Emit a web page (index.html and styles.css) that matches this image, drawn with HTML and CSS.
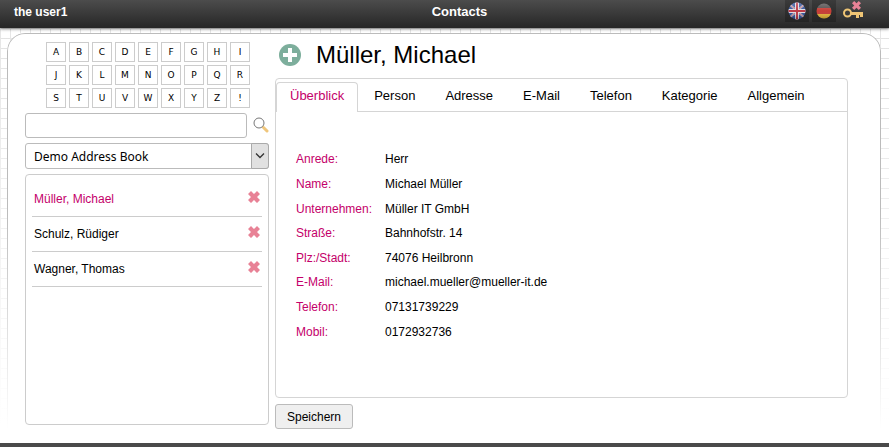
FILE: index.html
```html
<!DOCTYPE html>
<html lang="de">
<head>
<meta charset="utf-8">
<meta name="viewport" content="width=device-width, initial-scale=1">
<title>Contacts</title>
<link rel="stylesheet" href="styles.css">
</head>
<body>
<svg width="0" height="0" class="sprite" aria-hidden="true">
  <symbol id="cross" viewBox="0 0 12 12"><path d="M3 0 6 3 9 0 12 3 9 6 12 9 9 12 6 9 3 12 0 9 3 6 0 3z"/></symbol>
</svg>
<header class="topbar">
  <span class="user">the user1</span>
  <h1 class="title">Contacts</h1>
  <nav class="tools" aria-label="Sprache und Abmelden">
    <a class="tile" href="#en" aria-label="English">
      <svg width="20" height="18" viewBox="0 0 20 18">
        <defs>
          <clipPath id="ball"><circle cx="10" cy="9" r="8.500"/></clipPath>
          <linearGradient id="gloss" x1="0" y1="0" x2="0" y2="1"><stop offset="0" stop-color="#fff" stop-opacity=".3"/><stop offset=".5" stop-color="#fff" stop-opacity=".05"/><stop offset="1" stop-color="#000" stop-opacity=".3"/></linearGradient>
        </defs>
        <g clip-path="url(#ball)">
          <path fill="#2b4a94" d="M0 0h20v18H0z"/>
          <path stroke="#c9cad6" stroke-width="2" d="M1 1l18 16M19 1 1 17"/>
          <path stroke="#b5404a" stroke-width=".8" d="M1 1l18 16M19 1 1 17"/>
          <path stroke="#dcdce2" stroke-width="4" d="M10 0v18M0 9h20"/>
          <path stroke="#b92f3c" stroke-width="2" d="M10 0v18M0 9h20"/>
          <path fill="url(#gloss)" d="M0 0h20v18H0z"/>
        </g>
      </svg>
    </a>
    <a class="tile" href="#de" aria-label="Deutsch">
      <svg width="20" height="18" viewBox="0 0 20 18">
        <defs><clipPath id="ball2"><circle cx="10" cy="9" r="7.500"/></clipPath></defs>
        <g clip-path="url(#ball2)">
          <path fill="#4a4646" d="M0 0h20v6H0z"/>
          <path fill="#c4332b" d="M0 6h20v6H0z"/>
          <path fill="#e6b32e" d="M0 12h20v6H0z"/>
          <path fill="url(#gloss)" d="M0 0h20v18H0z"/>
        </g>
      </svg>
    </a>
    <a class="logout" href="#logout" aria-label="Abmelden">
      <svg width="20" height="20" viewBox="0 0 20 20">
        <circle cx="4.500" cy="13" r="3.500" fill="none" stroke="#efc575" stroke-width="2"/>
        <path fill="#efc575" d="M8 12h12v5h-3v-2h-1v3h-3v-3H8z"/>
        <use href="#cross" x="9" y="1" width="9" height="9" fill="#e88296"/>
      </svg>
    </a>
  </nav>
</header>
<main class="sheet">
  <aside class="sidebar">
    <div class="letters">
      <button>A</button><button>B</button><button>C</button><button>D</button><button>E</button><button>F</button><button>G</button><button>H</button><button>I</button>
      <button>J</button><button>K</button><button>L</button><button>M</button><button>N</button><button>O</button><button>P</button><button>Q</button><button>R</button>
      <button>S</button><button>T</button><button>U</button><button>V</button><button>W</button><button>X</button><button>Y</button><button>Z</button><button>!</button>
    </div>
    <form class="search">
      <input type="text" aria-label="Suche">
      <button aria-label="Suchen">
        <svg width="16" height="16" viewBox="0 0 16 16" fill="none">
          <path stroke="#efc67c" stroke-width="3" stroke-linecap="round" d="M10.500 10.500 14 14"/>
          <circle cx="6" cy="6" r="5" fill="#fff" stroke="#777"/>
        </svg>
      </button>
    </form>
    <div class="book">
      <select aria-label="Adressbuch"><option>Demo Address Book</option></select>
      <span class="arrow"><svg width="10" height="6" viewBox="0 0 10 6"><path fill="none" stroke="#333" stroke-width="1.300" d="M1 .500 5 4.500 9 .500"/></svg></span>
    </div>
    <ul class="contacts">
      <li><a class="active" href="#mueller">Müller, Michael</a><button aria-label="Müller, Michael löschen"><svg width="12" height="12"><use href="#cross"/></svg></button></li>
      <li><a href="#schulz">Schulz, Rüdiger</a><button aria-label="Schulz, Rüdiger löschen"><svg width="12" height="12"><use href="#cross"/></svg></button></li>
      <li><a href="#wagner">Wagner, Thomas</a><button aria-label="Wagner, Thomas löschen"><svg width="12" height="12"><use href="#cross"/></svg></button></li>
    </ul>
  </aside>
  <section class="detail">
    <div class="heading">
      <button class="add" aria-label="Neuer Kontakt">
        <svg width="22" height="22" viewBox="0 0 22 22"><circle cx="11" cy="11" r="11" fill="#7dae9c"/><path fill="#fff" d="M9 4h4v5h5v4h-5v5H9v-5H4V9h5z"/></svg>
      </button>
      <h2>Müller, Michael</h2>
    </div>
    <div class="card">
      <nav class="tabs">
        <a class="active" href="#overview">Überblick</a>
        <a href="#person">Person</a>
        <a href="#address">Adresse</a>
        <a href="#email">E-Mail</a>
        <a href="#phone">Telefon</a>
        <a href="#category">Kategorie</a>
        <a href="#general">Allgemein</a>
      </nav>
      <dl class="fields">
        <dt>Anrede:</dt><dd>Herr</dd>
        <dt>Name:</dt><dd>Michael Müller</dd>
        <dt>Unternehmen:</dt><dd>Müller IT GmbH</dd>
        <dt>Straße:</dt><dd>Bahnhofstr. 14</dd>
        <dt>Plz:/Stadt:</dt><dd>74076 Heilbronn</dd>
        <dt>E-Mail:</dt><dd>michael.mueller@mueller-it.de</dd>
        <dt>Telefon:</dt><dd>07131739229</dd>
        <dt>Mobil:</dt><dd>0172932736</dd>
      </dl>
    </div>
    <button class="save">Speichern</button>
  </section>
</main>
<footer class="bottombar"></footer>
</body>
</html>
```
FILE: styles.css
```css
* { box-sizing: border-box; }

body {
  margin: 0;
  min-height: 100vh;
  display: flex;
  flex-direction: column;
  font: 12px/16px "Liberation Sans", Arial, sans-serif;
  color: #000;
  background:
    linear-gradient(rgba(255, 255, 255, 0), #fff 425px),
    linear-gradient(90deg, #e4e4e4 1px, transparent 1px) 0 0 / 10px 10px,
    linear-gradient(#e0e0e0 1px, transparent 1px) 0 8px / 10px 10px,
    #fff;
}

button {
  padding: 0;
  border: 0;
  background: none;
  font: inherit;
  color: inherit;
}

a { color: inherit; text-decoration: none; }
svg { display: block; }
.sprite { position: absolute; }

.topbar {
  display: grid;
  grid-template-columns: 1fr auto 1fr;
  height: 28px;
  background: linear-gradient(#4c4c4c, #262626);
  box-shadow: 0 1px 3px rgba(0, 0, 0, .5);
  color: #fff;
  font-weight: bold;
  line-height: 24px;
}

.user { padding-left: 14px; }

.title {
  margin: 0;
  padding-left: 30px;
  font-size: 13px;
  line-height: 24px;
}

.tools {
  display: flex;
  justify-content: flex-end;
  gap: 3px;
  padding-right: 26px;
}

.tile {
  width: 24px;
  height: 22px;
  padding: 2px;
  background: rgba(0, 0, 0, .22);
}

.logout { margin-left: 4px; }

.sheet {
  position: relative;
  flex: 1;
  display: flex;
  align-items: flex-start;
  gap: 6px;
  margin: 5px 8px 14px 7px;
  padding: 9px 33px 0 18px;
  border-radius: 18px 18px 0 0;
  background: #fff;
}

.sheet::before {
  content: "";
  position: absolute;
  inset: 0;
  border: 1px solid #bbb;
  border-bottom: 0;
  border-radius: inherit;
  mask-image: linear-gradient(#000 45%, transparent);
  pointer-events: none;
}

.sidebar {
  width: 244px;
  display: flex;
  flex-direction: column;
  gap: 5px;
}

.letters {
  display: grid;
  grid-template-columns: repeat(9, 20px);
  gap: 3px;
  padding-left: 21px;
}

.letters button {
  height: 20px;
  border: 1px solid #ccc;
  font: 9px/18px "DejaVu Sans", Verdana, sans-serif;
}

.search {
  display: flex;
  align-items: center;
  gap: 6px;
}

.search input {
  flex: 1;
  min-width: 0;
  height: 25px;
  border: 1px solid #bbb;
  border-radius: 3px;
  font: inherit;
}

.search svg { margin-bottom: 2px; }

.book { display: grid; }

.book select,
.arrow { grid-area: 1 / 1; }

.book select {
  appearance: none;
  height: 26px;
  padding: 0 24px 0 8px;
  border: 1px solid #bbb;
  border-radius: 3px;
  background: #fff;
  font: 12px "Noto Sans", sans-serif;
  color: #000;
}

.arrow {
  justify-self: end;
  width: 18px;
  display: grid;
  place-items: center;
  border: 1px solid #aaa;
  border-radius: 0 3px 3px 0;
  background: #e1e1e1;
  pointer-events: none;
}

.contacts {
  height: 251px;
  margin: 0;
  padding: 7px 6px;
  border: 1px solid #ccc;
  border-radius: 4px;
  list-style: none;
}

.contacts li {
  display: flex;
  justify-content: space-between;
  align-items: flex-start;
  height: 35px;
  padding: 9px 2px 0;
  border-bottom: 1px solid #ccc;
}

.contacts svg { fill: #e88296; }
.contacts .active { color: #c4006a; }

.detail {
  flex: 1;
  display: flex;
  flex-direction: column;
  align-items: flex-start;
}

.heading {
  display: flex;
  align-items: center;
  gap: 15px;
  height: 36px;
  padding: 0 4px 10px;
}

.heading h2 {
  margin: 0;
  font-size: 24px;
  font-weight: normal;
  line-height: 28px;
}

.card {
  width: 100%;
  height: 320px;
  border: 1px solid #d5d5d5;
  border-radius: 4px;
}

.tabs {
  display: flex;
  gap: 2px;
  padding-top: 3px;
  border-bottom: 1px solid #d5d5d5;
  font-size: 13px;
}

.tabs a {
  height: 29px;
  padding: 5px 13px 0;
  border: 1px solid transparent;
  border-bottom: 0;
  border-radius: 4px 4px 0 0;
}

.tabs .active {
  margin-bottom: -1px;
  height: 30px;
  border-color: #d5d5d5;
  background: #fff;
  color: #c4006a;
}

.fields {
  display: grid;
  grid-template-columns: 79px 1fr;
  grid-auto-rows: 1fr;
  align-items: center;
  column-gap: 10px;
  height: 197px;
  margin: 35px 20px 0;
}

.fields dt { color: #c4006a; }
.fields dd { margin: 0; }

.save {
  height: 25px;
  margin-top: 6px;
  padding: 0 11px;
  border: 1px solid #bbb;
  border-radius: 3px;
  background: #efefef;
}

.bottombar {
  height: 4px;
  background: #4a4a4a;
}
```
